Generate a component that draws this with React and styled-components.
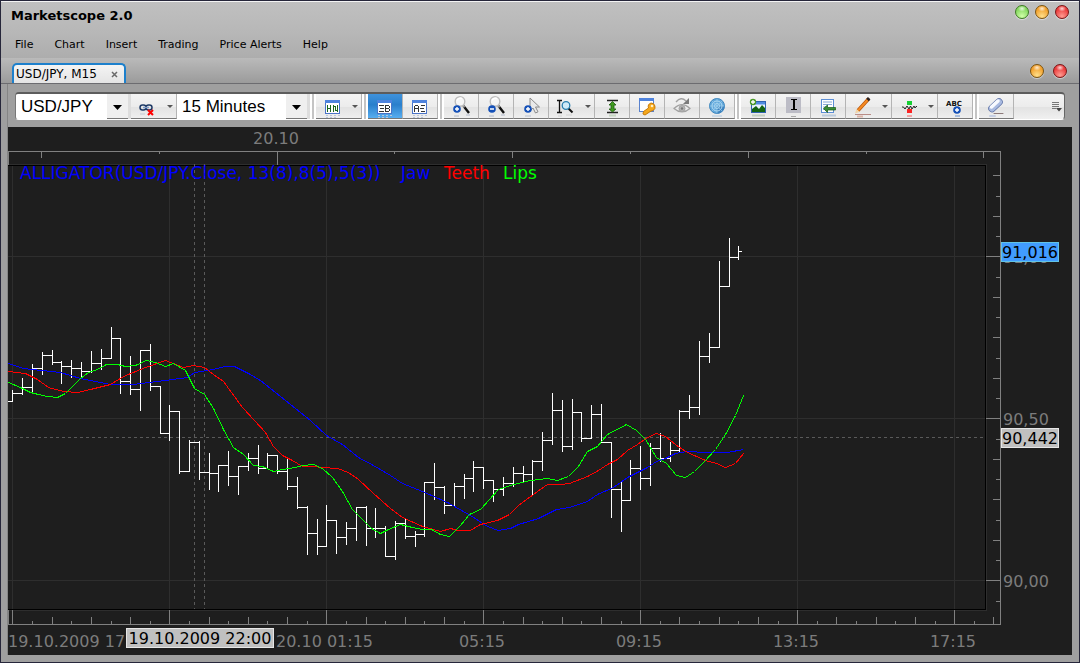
import React from 'react';
import styled, { createGlobalStyle } from 'styled-components';

// high, low, close of every 15 minute bar, in chart units
const BARS = [
    [390,401,393],[378,394,387],[364,393,368],[352,374,355],[350,364,362],
    [361,383,366],[360,377,368],[362,376,371],[351,372,363],[349,369,358],
    [327,358,338],[339,393,381],[356,394,389],[350,410,350],[344,390,386],
    [386,433,433],[405,440,411],[411,473,471],[440,471,442],[441,479,472],
    [453,489,473],[465,491,465],[451,485,476],[466,494,466],[453,470,458],
    [445,473,468],[453,468,455],[455,473,471],[459,489,486],[477,508,507],
    [506,554,533],[519,554,546],[505,546,520],[520,553,537],[522,544,528],
    [507,540,507],[506,545,528],[508,537,528],[526,556,556],[521,559,523],
    [519,538,536],[531,546,534],[482,536,482],[463,499,487],[486,513,505],
    [483,506,486],[474,498,478],[461,491,467],[468,488,480],[481,501,489],
    [477,495,483],[467,486,473],[466,481,474],[460,494,461],[432,470,440],
    [393,444,410],[400,451,446],[399,449,412],[412,441,438],[405,438,414],
    [404,442,442],[443,517,489],[482,531,500],[460,500,468],[446,489,478],
    [443,485,448],[433,461,458],[442,461,450],[410,452,411],[395,418,407],
    [341,414,356],[333,362,347],[261,347,286],[238,286,257],[246,259,251],
];

const JAW = '8,363 23,368 60,372 80,378 110,384 133,384 165,380 187,377 194,372 213,369 224,366 234,366 248,373 260,380 285,400 310,420 326,435 342,444 358,457 373,465 390,475 402,483 422,491 447,502 470,515 487,526 498,530 510,528 518,524 538,518 556,509 569,507 587,501 597,494 613,487 627,477 647,467 656,461 665,458 675,453 687,451 705,452 727,452 743,449';
const TEETH = '8,371 25,373 37,379 48,387 63,391 77,392 90,389 110,384 123,376 145,367 165,360 183,367 193,365 204,367 213,374 223,381 242,407 254,420 265,432 273,446 282,455 292,460 302,466 312,466 322,467 337,468 348,472 358,479 373,493 390,508 402,517 422,526 440,531 450,528 458,530 470,530 480,524 497,520 509,514 518,505 537,491 547,484 560,484 569,483 587,476 598,470 607,464 617,459 627,450 637,444 647,437 656,433 665,436 675,444 685,451 705,460 716,463 725,467 735,463 743,453';
const LIPS = '8,382 20,387 30,392 38,394 47,396 57,397 65,393 72,386 80,378 88,372 97,369 106,364 117,364 125,366 135,365 146,360 155,362 165,366 173,363 185,370 194,388 204,394 213,408 223,429 233,447 243,454 253,465 262,466 273,471 282,469 295,467 302,465 313,464 322,468 332,477 342,491 352,509 362,519 371,528 380,533 388,529 400,524 412,527 422,529 431,529 440,534 449,536 460,525 469,514 480,509 498,489 513,484 530,480 547,478 557,480 568,476 578,466 587,451 597,446 607,434 626,424 636,430 645,439 656,457 666,463 676,475 685,477 694,471 704,461 715,449 725,434 735,415 743,395';

const barX = (i) => Math.round(12.4 + 9.81 * i);
const priceY = (k) => Math.round(256.4 + 20.25 * k);
const range = (from, to) => Array.from({ length: to - from }, (_, i) => from + i);

const barPath = BARS.map(([high, low, close], i) => {
    const x = barX(i);
    const end = i === BARS.length - 1 ? x + 4 : barX(i + 1) + 1;
    return `M${x + 0.5} ${high}V${low + 1}M${x} ${close + 0.5}H${end}`;
}).join('');

const Chart = () => {
    const majors = range(0, 7).map((i) => barX(i * 16));
    const levels = [0, 8, 16].map(priceY);
    return (
        <ChartSvg viewBox="8 127 1064 528" role="img" aria-label="USD/JPY, M15">
            <g fill="none" shapeRendering="crispEdges">
                <g stroke="#2e2e2e">
                    {majors.map((x) => <path key={x} d={`M${x + 0.5} 165V609`} />)}
                    {levels.map((y) => <path key={y} d={`M8 ${y + 0.5}H985`} />)}
                    <path d="M8 164.5H986.5V610.5H8" />
                </g>
                <path d="M8 165.5H985.5V609.5H8" stroke="#000" />
                <g stroke="#808080">
                    <path d="M8 151.5H1000.5V624.5H8M8.5 152V165M8.5 610V624" />
                    {range(0, 9).map((i) => {
                        const x = Math.round(41 + 117.8 * i);
                        const len = i === 2 ? 13 : i % 2 ? 2 : 6;
                        return <path key={x} d={`M${x + 0.5} 152v${len}`} />;
                    })}
                    {range(0, 51).map((i) => {
                        const len = i % 8 === 0 ? 14 : i % 2 ? 3 : 7;
                        return <path key={i} d={`M${barX(i * 2) + 0.5} 624v${-len}`} />;
                    })}
                    {range(-4, 18).map((k) => {
                        const len = k % 8 === 0 ? 14 : k % 2 ? 4 : 7;
                        return <path key={k} d={`M1000 ${priceY(k) + 0.5}h${-len}`} />;
                    })}
                </g>
                <g stroke="#5a5a5a" strokeDasharray="3 3">
                    <path d="M194.5 164V609" />
                    <path d="M204.5 164V609" />
                    <path d="M8 437.5H986" />
                </g>
            </g>
            <Legend x="20" y="179" fill="#0000ff">ALLIGATOR(USD/JPY.Close, 13(8),8(5),5(3))</Legend>
            <Legend x="401" y="179" fill="#0000ff">Jaw</Legend>
            <Legend x="444" y="179" fill="#ff0000">Teeth</Legend>
            <Legend x="503" y="179" fill="#00ff00">Lips</Legend>
            <g fill="none" shapeRendering="crispEdges">
                <path d={`M8 401.5H13${barPath}`} stroke="#fff" />
                <g transform="translate(0.5 0.5)">
                    <polyline points={JAW} stroke="#0000ff" />
                    <polyline points={TEETH} stroke="#ff0000" />
                    <polyline points={LIPS} stroke="#00ff00" />
                </g>
            </g>
            <AxisText x="276" y="144" textAnchor="middle">20.10</AxisText>
            <AxisText x="1003" y="263">91,00</AxisText>
            <AxisText x="1003" y="425">90,50</AxisText>
            <AxisText x="1003" y="587">90,00</AxisText>
            <AxisText x="8" y="647">19.10.2009 17:15</AxisText>
            <AxisText x="276" y="647">20.10 01:15</AxisText>
            {['05:15', '09:15', '13:15', '17:15'].map((t, i) => (
                <AxisText key={t} x={482 + 157 * i} y="647" textAnchor="middle">{t}</AxisText>
            ))}
            <Tag x={1001} y={242} w={58} fill="#419cff" line="#62c3e6">91,016</Tag>
            <Tag x={1001} y={428} w={58}>90,442</Tag>
            <Tag x={126} y={628} w={148}>19.10.2009 22:00</Tag>
        </ChartSvg>
    );
};

const Tag = ({ x, y, w, fill = '#c0c0c0', line = '#e6e6e6', children }) => (
    <g>
        <rect x={x + 0.5} y={y + 0.5} width={w - 1} height="19" fill={fill} stroke={line} />
        <TagText x={x + w / 2} y={y + 16} textAnchor="middle">{children}</TagText>
    </g>
);

const Plus = ({ x, y, minus }) => (
    <g>
        <circle cx={x} cy={y} r="3.8" fill="#1450b8" />
        <path d={minus ? `M${x - 2} ${y}h4` : `M${x - 2} ${y}h4M${x} ${y - 2}v4`} stroke="#fff" strokeWidth="1.4" />
    </g>
);

const Glass = () => (
    <g fill="none">
        <path d="M14.5 12L20 19" stroke="#111" strokeWidth="2.4" />
        <path d="M13.5 11l2 2.4" stroke="#999" strokeWidth="2" />
        <circle cx="11" cy="7.5" r="4.8" fill="#f6f6f6" stroke="#bdbdbd" strokeWidth="1.4" />
        <path d="M8 6.5a3.5 3.5 0 0 1 5-2" stroke="#fff" strokeWidth="1.5" />
        <path d="M5 22h5M17 21h4" stroke="#cfd3dc" strokeWidth="2" />
    </g>
);

const Sheet = ({ children }) => (
    <g fill="none" shapeRendering="crispEdges">
        <rect x="4.5" y="6.5" width="14" height="13" fill="#fff" stroke="#4a74c8" />
        <rect x="4" y="6" width="15" height="3" fill="#4f83dd" />
        <path d="M5 21.5h2M9 21.5h2M13 21.5h2M17 21.5h2M5 23.5h2M9 23.5h2M13 23.5h2" stroke="#b9c6dc" />
        {children}
    </g>
);

const Glyphs = styled.text`
    font: bold 7px 'DejaVu Sans', sans-serif;
    fill: #111;
`;

const ICONS = {
    unlink: (
        <g fill="none">
            <rect x="4" y="11" width="6" height="5" rx="2.5" stroke="#1f3a66" strokeWidth="1.5" />
            <rect x="10" y="11" width="6" height="5" rx="2.5" stroke="#1f3a66" strokeWidth="1.5" />
            <path d="M7 13.5h6" stroke="#7f9cc8" strokeWidth="1.4" />
            <path d="M12 16l5 5M17 16l-5 5" stroke="#f00" strokeWidth="2" />
            <path d="M4 20h5" stroke="#c4cad4" />
        </g>
    ),
    period: (
        <Sheet><path d="M6.5 11v7M6 14.5h4M9.5 11v7M12.5 11v7M12 12.5h2M14.5 12v5M14 16.5h2M16.5 11v7" stroke="#1d6a1d" /></Sheet>
    ),
    bid: (
        <Sheet><path d="M6 11.5h5M7 14.5h4M6 17.5h5M12.5 11v7M12 11.5h4M12 14.5h4M12 17.5h4M16.5 12v2M16.5 15v2" stroke="#333" /></Sheet>
    ),
    ask: (
        <Sheet><path d="M6.5 12v6M7 11.5h3M10.5 12v6M7 14.5h3M13 11.5h4M12 14.5h4M13 17.5h4" stroke="#333" /></Sheet>
    ),
    zoomIn: <g><Glass /><Plus x={8} y={15} /></g>,
    zoomOut: <g><Glass /><Plus x={8} y={15} minus /></g>,
    pointer: (
        <g>
            <path d="M11 4v13l3-3 2.5 5 2.5-1.2-2.5-4.8h4z" fill="#e9e9e9" stroke="#8a8a8a" />
            <Plus x={9} y={15} />
            <path d="M6 22h6" stroke="#d2d6de" strokeWidth="2" />
        </g>
    ),
    measure: (
        <g fill="none">
            <path d="M5.5 6v13M3 6.5h5M3 18.5h5" stroke="#111" strokeWidth="1.3" />
            <path d="M14.5 14.5l4 4" stroke="#111" strokeWidth="2" />
            <circle cx="12" cy="11.5" r="3.8" fill="#cfeaf8" stroke="#2b7fae" strokeWidth="1.3" />
            <path d="M4 22h4M12 21h6" stroke="#d2d2d2" />
        </g>
    ),
    fit: (
        <g fill="none">
            <path d="M7 6.5h11M7 18.5h11" stroke="#222" strokeWidth="1.4" />
            <path d="M12.5 7.5l3.500 3.500h-2v4h2l-3.500 3-3.500-3h2v-4h-2z" fill="#3f9a1e" stroke="#1d5c0c" strokeWidth="0.8" />
            <path d="M9 21.5h7" stroke="#c6d6c2" strokeWidth="2" />
        </g>
    ),
    key: (
        <g>
            <rect x="4.5" y="4.5" width="14" height="13" fill="#fff" stroke="#5a82cc" />
            <rect x="4" y="4" width="15" height="3" fill="#4f83dd" />
            <path d="M16 9a4 4 0 0 1 2 7.5l-2 .5-6 4-2-1 .5-2.5 5-3.5A4 4 0 0 1 16 9z" fill="#f5a81c" stroke="#c77a08" />
            <circle cx="17" cy="12" r="1.3" fill="#fff2c8" />
        </g>
    ),
    eye: (
        <g fill="none" stroke="#a2a2a2">
            <path d="M4 14.5q8-8 16 0q-8 7-16 0z" fill="#ececec" strokeWidth="1.2" />
            <circle cx="12" cy="14.5" r="3" fill="#b4b4b4" />
            <circle cx="12" cy="14.5" r="1.2" fill="#777" stroke="none" />
            <path d="M6 8q5-6 10-1" strokeWidth="1.4" />
            <path d="M19 4v6h-6z" fill="#7b7b7b" stroke="none" />
        </g>
    ),
    radar: (
        <g fill="none">
            <circle cx="12" cy="12" r="7.5" fill="#63a9dc" stroke="#3e86bd" />
            <path d="M12 12h7.5A7.5 7.5 0 0 1 12 19.5z" fill="#3f84c0" />
            <circle cx="12" cy="12" r="5" stroke="#b3dbf3" />
            <circle cx="12" cy="12" r="2.5" stroke="#b3dbf3" />
            <path d="M12 4.5v15M4.5 12h15M7 7l10 10M17 7L7 17" stroke="#9acbeb" strokeWidth="0.7" />
            <path d="M7 22h10" stroke="#cfdbe6" strokeWidth="2" />
        </g>
    ),
    picture: (
        <g>
            <rect x="5.5" y="7.5" width="14" height="11" fill="#e8f3ff" stroke="#2f62b0" />
            <rect x="6" y="8" width="13" height="2.5" fill="#4f8be0" />
            <path d="M6 18v-3l4-3 3 3 3-4 3 3v4z" fill="#126312" />
            <circle cx="7" cy="8" r="3.2" fill="#4b9b28" />
            <path d="M5 8h4M7 6v4" stroke="#fff" strokeWidth="1.3" />
            <path d="M6 21.5h13" stroke="#c3d0c2" strokeWidth="2" />
        </g>
    ),
    text: (
        <g fill="none" shapeRendering="crispEdges">
            <rect x="5" y="3" width="15" height="16" fill="#bcbcc6" />
            <path d="M10 5.5h6M10 15.5h6" stroke="#000" />
            <path d="M13 5v11" stroke="#000" strokeWidth="2" />
            <path d="M10 22.5h5" stroke="#aaa" />
        </g>
    ),
    list: (
        <g fill="none">
            <rect x="5.5" y="5.5" width="12" height="13" fill="#fff" stroke="#5d8fd6" />
            <path d="M7 8h9M7 10.5h9M7 13h4M7 15.5h4" stroke="#8aa9d8" />
            <path d="M7.5 14.5l4-3.5v2.5h8v2.5h-8v2.5z" fill="#3b8d35" stroke="#155815" strokeWidth="0.7" />
            <path d="M6 21.5h14" stroke="#bccbdc" strokeWidth="2" />
        </g>
    ),
    pencil: (
        <g fill="none">
            <path d="M7 16.5L17.5 5" stroke="#b9560a" strokeWidth="3.4" />
            <path d="M7 16.5L17.5 5" stroke="#f58a22" strokeWidth="2" />
            <path d="M16.5 6l1.7-1.9" stroke="#2a2020" strokeWidth="3.4" />
            <path d="M5.5 15l3 3-4.5 1.5z" fill="#f0d4a8" />
            <path d="M4 20.5h16" stroke="#b98d88" />
            <path d="M6 22.5h6" stroke="#dcb4a8" strokeWidth="2" />
        </g>
    ),
    signal: (
        <g fill="none">
            <path d="M10 7h5v4h-5z" fill="#18cf35" />
            <path d="M10 15h5v4h-5z" fill="#fb2424" />
            <path d="M5 13h1.500l1.500 2 2-3 2 3 1.500-3 1.500 3 2-3 1 2 1-1.500h1" stroke="#222" />
            <path d="M10 22h5" stroke="#f3a5a5" strokeWidth="2" />
        </g>
    ),
    label: (
        <g>
            <Glyphs x="3" y="12">ABC</Glyphs>
            <Plus x={14} y={16} />
            <path d="M12 22h5" stroke="#a9bede" strokeWidth="2" />
        </g>
    ),
    eraser: (
        <g fill="none" strokeLinecap="round">
            <path d="M10 19.5h9" stroke="#8c7a7a" />
            <path d="M8 14.5L15 8" stroke="#5f74a8" strokeWidth="7.500" />
            <path d="M8 14.5L15 8" stroke="#a9bae0" strokeWidth="6" />
            <path d="M7.500 13L14 7" stroke="#f8faff" strokeWidth="3.500" />
            <path d="M6 22h5" stroke="#c6cfe4" strokeWidth="2" />
        </g>
    ),
};

const GROUPS = [
    [['period', 'Period', true]],
    [['bid', 'Bid prices'], ['ask', 'Ask prices']],
    [['zoomIn', 'Zoom in'], ['zoomOut', 'Zoom out'], ['pointer', 'Pointer'], ['measure', 'Measure', true],
        ['fit', 'Fit height'], ['key', 'Window key'], ['eye', 'Refresh view'], ['radar', 'Radar']],
    [['picture', 'Add picture'], ['text', 'Text'], ['list', 'Data list'], ['pencil', 'Draw', true],
        ['signal', 'Signals', true], ['label', 'Add label']],
    [['eraser', 'Erase']],
];

const Tool = ({ icon, label, menu, active }) => (
    <ToolButton aria-label={label} $menu={menu} $active={active}>
        <svg width="24" height="24" viewBox="0 0 24 24">{ICONS[icon]}</svg>
        {menu && <Caret />}
    </ToolButton>
);

const Combo = ({ label, value, others, width }) => (
    <ComboBox $width={width}>
        <select aria-label={label} defaultValue={value}>
            {[value, ...others].map((o) => <option key={o}>{o}</option>)}
        </select>
        <ComboArrow><svg width="9" height="5" viewBox="0 0 9 5"><path d="M0 0h9L4.5 5z" /></svg></ComboArrow>
    </ComboBox>
);

const App = () => (
    <Window>
        <GlobalStyle />
        <TitleBar>
            <h1>Marketscope 2.0</h1>
            <Lights $gap={6}>
                <Light $kind="green" aria-label="Minimize" />
                <Light $kind="amber" aria-label="Maximize" />
                <Light $kind="red" aria-label="Close" />
            </Lights>
        </TitleBar>
        <Menu>
            {['File', 'Chart', 'Insert', 'Trading', 'Price Alerts', 'Help'].map((m) => <button key={m}>{m}</button>)}
        </Menu>
        <TabBar>
            <Tab>
                <span>USD/JPY, M15</span>
                <button aria-label="Close tab">
                    <svg width="7" height="7" viewBox="0 0 7 7"><path d="M1 1l5 5M6 1L1 6" stroke="#6a6a6a" strokeWidth="1.5" /></svg>
                </button>
            </Tab>
            <Lights $gap={9}>
                <Light $kind="amber" aria-label="Restore chart" />
                <Light $kind="red" aria-label="Close chart" />
            </Lights>
        </TabBar>
        <Pane>
            <Toolbar>
                <Combo label="Instrument" value="USD/JPY" others={['EUR/USD']} width={115} />
                <Tool icon="unlink" label="Unlink" menu />
                <Combo label="Timeframe" value="15 Minutes" others={['1 Hour']} width={133} />
                {GROUPS.map((group, i) => (
                    <React.Fragment key={i}>
                        <Grip />
                        {group.map(([icon, label, menu]) => (
                            <Tool key={icon} icon={icon} label={label} menu={menu} active={icon === 'bid'} />
                        ))}
                    </React.Fragment>
                ))}
                <More aria-label="More tools">
                    <svg width="10" height="10" viewBox="0 0 10 10" fill="none">
                        <path d="M0 .5h7M0 2.5h7M0 4.5h7M0 6.5h4" stroke="#777" shapeRendering="crispEdges" />
                        <path d="M4 6h6L7 9.5z" fill="#444" />
                    </svg>
                </More>
            </Toolbar>
            <Chart />
        </Pane>
    </Window>
);

export default App;

const GlobalStyle = createGlobalStyle`
    body {
        margin: 0;
        background: #9f9f9f;
        font-family: 'DejaVu Sans', sans-serif;
        font-size: 11px;
        color: #000;
    }
    * {
        box-sizing: border-box;
    }
    button {
        padding: 0;
        border: 0;
        background: none;
        font: inherit;
        color: inherit;
    }
`;

const Window = styled.div`
    min-height: 100vh;
    border: 1px solid #26263a;
    background: #9f9f9f;
`;

const TitleBar = styled.header`
    display: flex;
    justify-content: space-between;
    height: 32px;
    padding: 3px 10px 0 10px;
    background: linear-gradient(#c0c0c0, #b7b7b7);
    border-top: 1px solid #f4f4f4;
    h1 {
        margin: 3px 0 0;
        font-size: 13px;
        line-height: 16px;
    }
`;

const Menu = styled.nav`
    display: flex;
    gap: 21px;
    height: 25px;
    padding: 5px 14px 0;
    background: linear-gradient(#b7b7b7, #adadad);
    button {
        height: 14px;
        line-height: 14px;
    }
`;

const Lights = styled.div`
    display: flex;
    gap: ${(p) => p.$gap}px;
    height: 14px;
`;

const lightColors = {
    green: ['#d0ffa8', '#86d860', '#3f7a24'],
    amber: ['#ffdf8a', '#f2a02c', '#7c5410'],
    red: ['#ff9c92', '#ea3c3c', '#7a1616'],
};

const Light = styled.button`
    width: 14px;
    height: 14px;
    border-radius: 50%;
    border: 1px solid ${(p) => lightColors[p.$kind][2]};
    background:
        radial-gradient(ellipse 4px 3px at 50% 22%, rgba(255,255,255,0.8), rgba(255,255,255,0) 100%),
        radial-gradient(circle at 50% 85%, ${(p) => lightColors[p.$kind][0]}, ${(p) => lightColors[p.$kind][1]} 65%);
    box-shadow: 0 1px 1px rgba(255,255,255,0.5);
`;

const TabBar = styled.div`
    display: flex;
    align-items: flex-end;
    justify-content: space-between;
    height: 26px;
    padding: 0 12px 0 11px;
    background: linear-gradient(#bababa, #9b9b9b);
    border-bottom: 1px solid #6c6c70;
    ${Lights} {
        align-self: center;
    }
`;

const Tab = styled.div`
    display: flex;
    align-items: center;
    justify-content: space-between;
    width: 114px;
    height: 20px;
    padding: 0 6px 0 2px;
    border: 2px solid #1d80cc;
    border-bottom: 0;
    border-radius: 5px 5px 0 0;
    background: linear-gradient(#f4f4f4, #e4e4e4);
    font-size: 12px;
    line-height: 14px;
    white-space: nowrap;
    button {
        display: flex;
    }
`;

const Pane = styled.main`
    margin: 0 7px 7px 6px;
    padding-top: 8px;
    border-left: 1px solid #858585;
`;

const Toolbar = styled.div`
    display: flex;
    height: 28px;
    margin: 0 7px 7px 7px;
    border-top: 2px solid #5c5c5c;
    border-left: 1px solid #777;
    border-right: 1px solid #666;
    border-bottom: 1px solid #fff;
    border-radius: 4px;
    background: linear-gradient(#f4f4f4, #ececec 50%, #e2e2e2 51%, #f0f0f0);
    overflow: hidden;
`;

const ToolButton = styled.button`
    display: flex;
    flex: none;
    align-items: center;
    width: ${(p) => (p.$menu ? 46 : 35)}px;
    padding-left: 5px;
    border-right: 1px solid #b4b4b4;
    border-bottom: 1px solid #777;
    background: ${(p) => (p.$active ? 'linear-gradient(#3f93dc, #2a7fcc 45%, #58aef0)' : 'none')};
    svg {
        flex: none;
    }
`;

const Caret = styled.span`
    margin-left: 7px;
    border: 3px solid transparent;
    border-top-color: #555;
    border-bottom: 0;
`;

const Grip = styled.span`
    flex: none;
    width: 6px;
    border-left: 2px solid #fff;
    border-right: 2px solid #fff;
    background: #c4c4c4;
`;

const ComboBox = styled.span`
    position: relative;
    flex: none;
    width: ${(p) => p.$width}px;
    border-right: 3px solid #ddd;
    select {
        width: 100%;
        height: 100%;
        padding: 0 0 0 5px;
        border: 0;
        appearance: none;
        background: #fff;
        color: #000;
        font: 17px 'Liberation Sans', sans-serif;
    }
`;

const ComboArrow = styled.span`
    position: absolute;
    top: 0;
    right: 0;
    bottom: 0;
    width: 21px;
    display: flex;
    align-items: center;
    justify-content: center;
    padding-top: 3px;
    background: #efefef;
    border-bottom: 1px solid #777;
    pointer-events: none;
`;

const More = styled.button`
    display: flex;
    flex: 1;
    align-items: center;
    justify-content: flex-end;
    padding-right: 2px;
`;

const ChartSvg = styled.svg`
    display: block;
    width: 100%;
    height: auto;
    background: #1e1e1e;
    font-family: 'DejaVu Sans', sans-serif;
    font-size: 16px;
`;

const AxisText = styled.text`
    fill: #7c7c7c;
`;

const Legend = styled.text`
    font-size: 17px;
`;

const TagText = styled.text`
    fill: #000;
`;
